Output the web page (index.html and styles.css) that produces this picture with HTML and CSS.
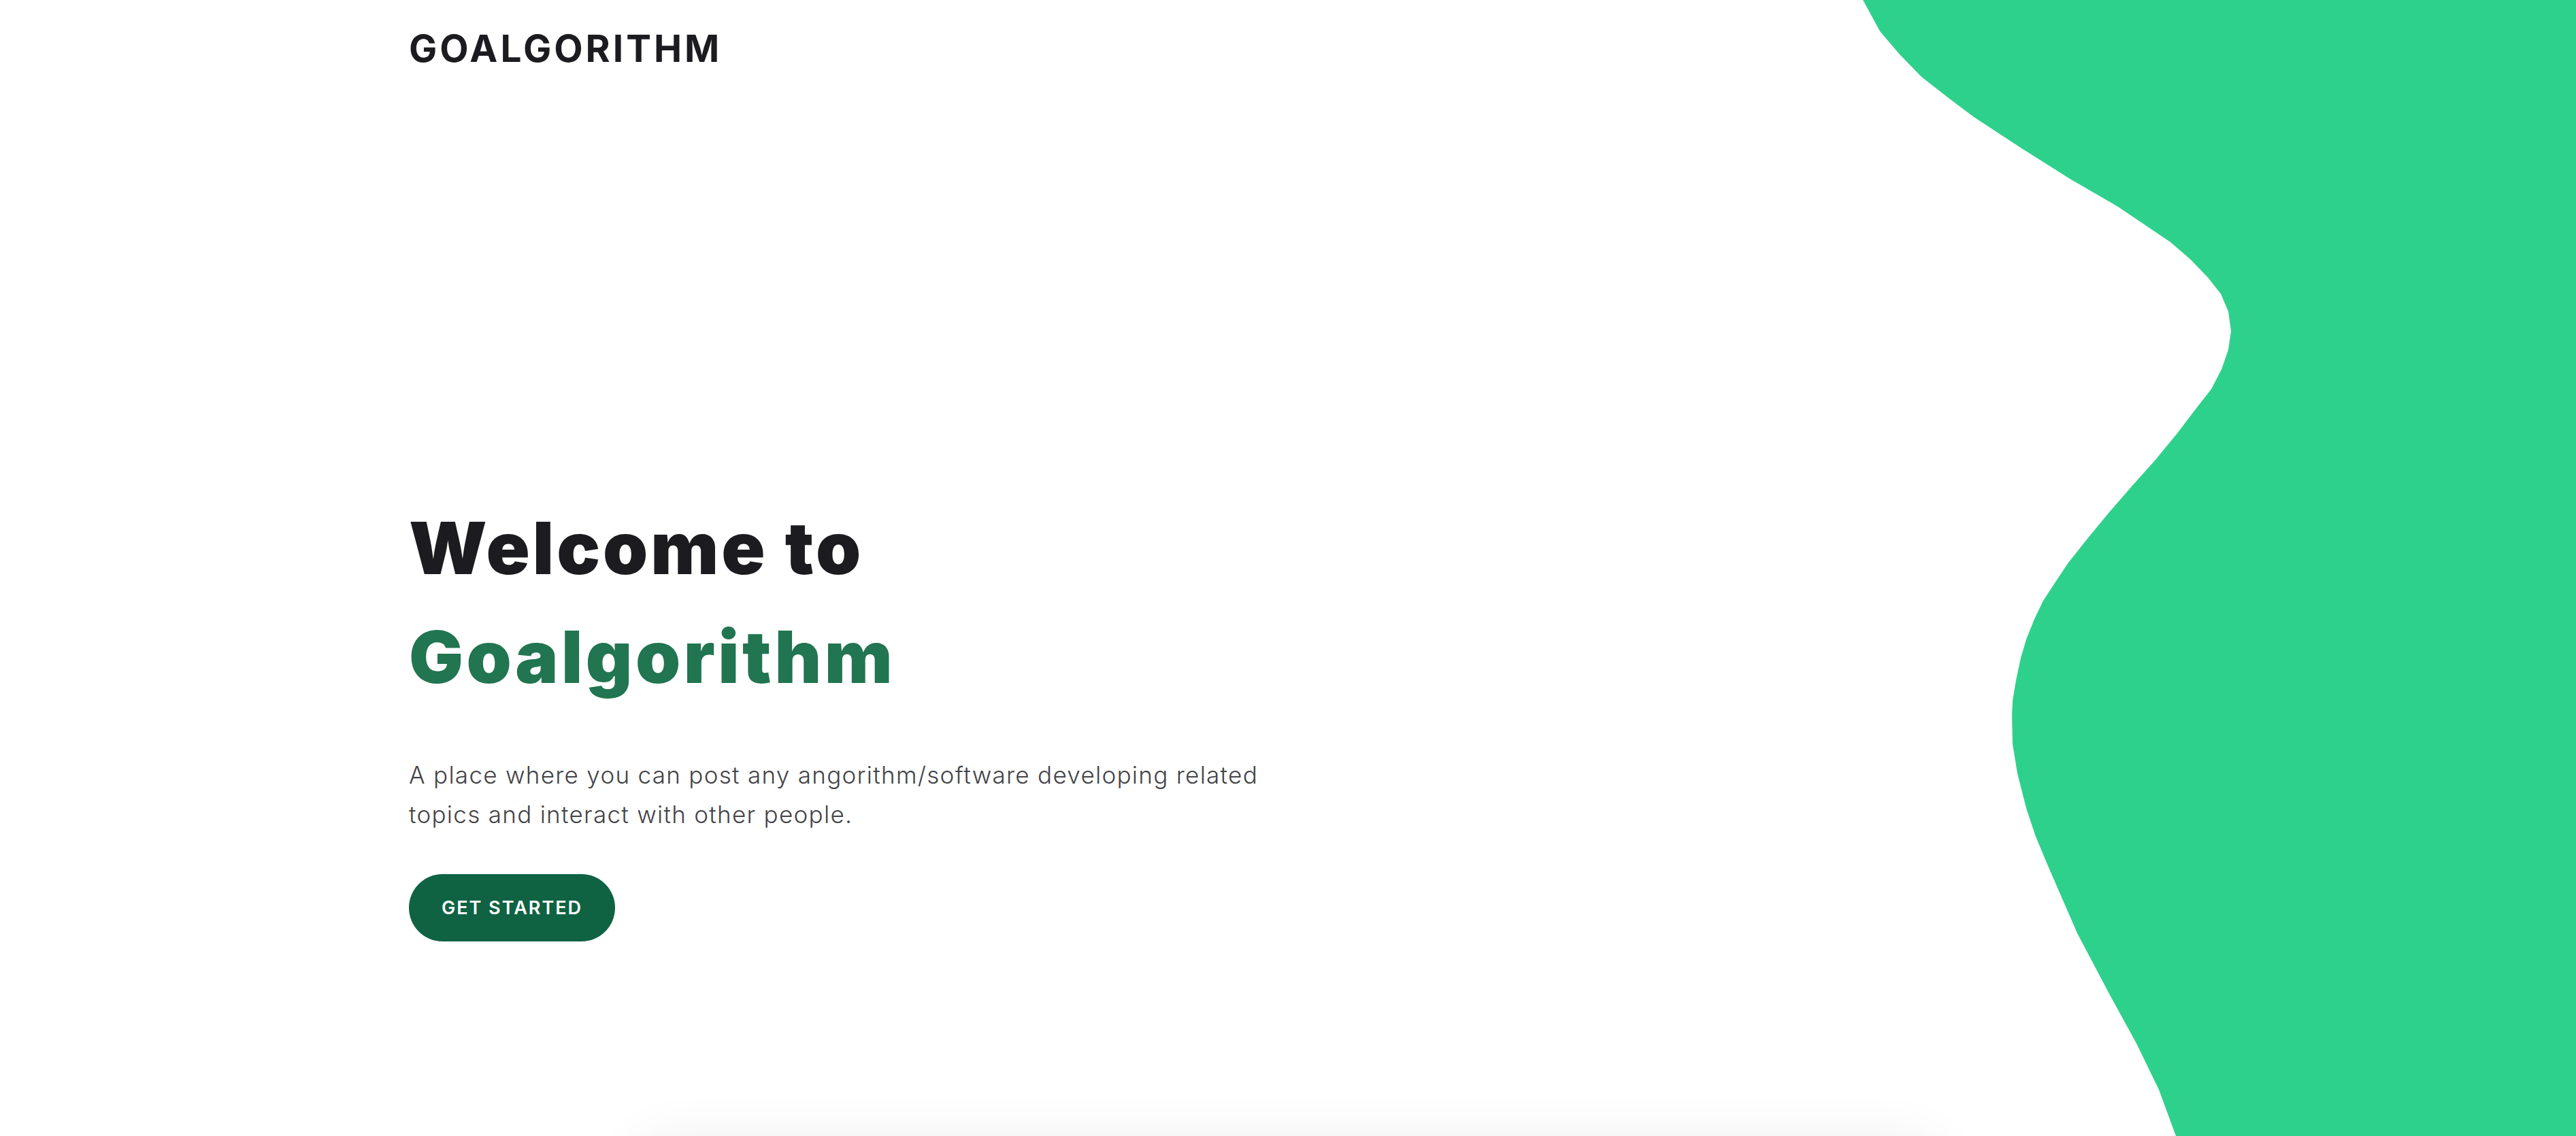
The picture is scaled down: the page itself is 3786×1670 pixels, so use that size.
FILE: index.html
```html
<!DOCTYPE html>
<html lang="en">
<head>
<meta charset="utf-8">
<title>Goalgorithm</title>
<link rel="stylesheet" href="styles.css">
</head>
<body>
<div class="page">
  <svg class="blob" viewBox="2700 0 1086 1670" preserveAspectRatio="none" aria-hidden="true">
    <path fill="#2ed18c" d="M2738,0 L2744,11 L2763,46 L2792,80 L2824,113 L2865,145 L2901,172 L2968,216 L3044,264 L3113,304 L3153,331 L3190,356 L3219,381 L3245,408 L3264,432 L3275,458 L3279,487 L3275,514 L3265,543 L3250,572 L3228,600 L3200,637 L3167,677 L3133,715 L3100,753 L3067,793 L3040,827 L3020,857 L3003,883 L2990,910 L2978,940 L2970,967 L2963,1000 L2958,1030 L2957,1052 L2958,1094 L2965,1137 L2978,1188 L2992,1230 L3010,1273 L3053,1372 L3100,1461 L3140,1534 L3173,1602 L3198,1670 L3786,1670 L3786,0 Z"/>
  </svg>
  <section class="hero">
    <header class="topbar">
      <div class="logo">GOALGORITHM</div>
    </header>
    <div class="hero-body">
      <h1 class="title">Welcome to<br><span class="accent">Goalgorithm</span></h1>
      <p class="lead">A place where you can post any angorithm/software developing related<br>topics and interact with other people.</p>
      <a class="cta" href="#">GET STARTED</a>
    </div>
  </section>
  <section class="card"></section>
</div>
</body>
</html>
```

FILE: styles.css
```css
html, body {
  margin: 0;
  padding: 0;
  background: #ffffff;
}

body {
  font-family: "Inter", "Liberation Sans", sans-serif;
  color: #1b1b20;
  overflow: hidden;
}

.page {
  position: relative;
  min-height: 1670px;
}

.blob {
  position: absolute;
  top: 0;
  right: 0;
  width: 1086px;
  height: 1670px;
  z-index: 0;
}

.hero {
  position: relative;
  z-index: 1;
  height: 1670px;
  max-width: 2584px;
  margin: 0 auto;
  display: flex;
  flex-direction: column;
}

.topbar {
  padding-top: 44px;
}

.logo {
  font-size: 55px;
  line-height: 1;
  font-weight: 700;
  letter-spacing: 4px;
  color: #1b1b20;
}

.hero-body {
  padding-top: 627px;
  display: flex;
  flex-direction: column;
  align-items: flex-start;
}

.title {
  margin: 0;
  font-size: 106px;
  line-height: 160px;
  font-weight: 900;
  letter-spacing: 4px;
  color: #1b1b20;
}

.accent {
  color: #217550;
  letter-spacing: 4.5px;
}

.lead {
  margin: 64px 0 0 0;
  font-size: 35px;
  line-height: 58px;
  font-weight: 300;
  letter-spacing: 1.3px;
  color: #434347;
}

.cta {
  margin-top: 59px;
  display: inline-flex;
  align-items: center;
  justify-content: center;
  height: 99px;
  width: 303px;
  border-radius: 50px;
  background: #0f6342;
  color: #ffffff;
  text-decoration: none;
  font-size: 27px;
  font-weight: 600;
  letter-spacing: 2px;
}

.card {
  width: 1900px;
  height: 600px;
  margin: 8px auto 0;
  background: #fff;
  border-radius: 30px;
  box-shadow: 0 0 80px rgba(0, 0, 0, 0.08);
}
```
